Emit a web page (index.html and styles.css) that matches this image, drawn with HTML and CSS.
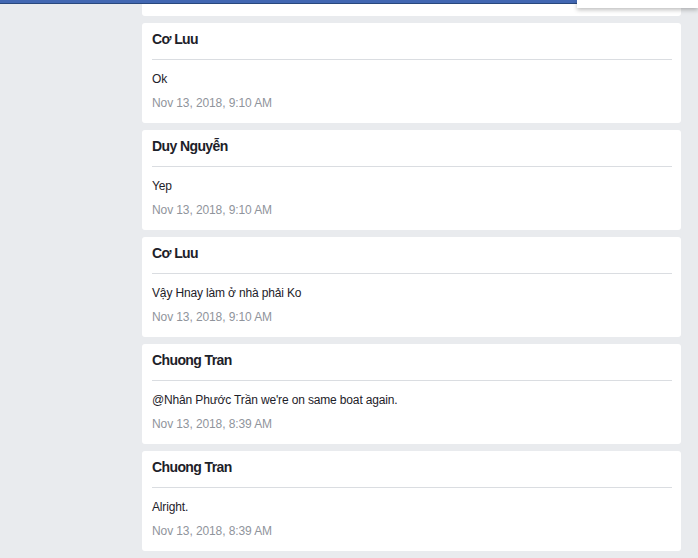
FILE: index.html
```html
<!DOCTYPE html>
<html>
<head>
<meta charset="utf-8">
<link rel="stylesheet" href="styles.css">
</head>
<body>
<div class="topbar"></div>
<div class="dropdown"></div>
<main class="feed">
  <div class="card"></div>
  <div class="card">
    <div class="name">Cơ Luu</div>
    <div class="msg">Ok</div>
    <div class="date">Nov 13, 2018, 9:10 AM</div>
  </div>
  <div class="card">
    <div class="name">Duy Nguyễn</div>
    <div class="msg">Yep</div>
    <div class="date">Nov 13, 2018, 9:10 AM</div>
  </div>
  <div class="card">
    <div class="name">Cơ Luu</div>
    <div class="msg">Vậy Hnay làm ở nhà phải Ko</div>
    <div class="date">Nov 13, 2018, 9:10 AM</div>
  </div>
  <div class="card">
    <div class="name">Chuong Tran</div>
    <div class="msg">@Nhân Phước Trần we're on same boat again.</div>
    <div class="date">Nov 13, 2018, 8:39 AM</div>
  </div>
  <div class="card">
    <div class="name">Chuong Tran</div>
    <div class="msg">Alright.</div>
    <div class="date">Nov 13, 2018, 8:39 AM</div>
  </div>
</main>
</body>
</html>
```
FILE: styles.css
```css
html, body {
  margin: 0;
  padding: 0;
  background: #e9ebee;
  font-family: "Liberation Sans", Arial, sans-serif;
  overflow: hidden;
}
.topbar {
  position: absolute;
  top: 0;
  left: 0;
  right: 0;
  height: 3px;
  background: #4267b2;
  border-bottom: 1px solid #29487d;
  z-index: 5;
}
.dropdown {
  position: absolute;
  top: 0;
  left: 577px;
  right: 0;
  height: 8px;
  background: #fff;
  box-shadow: 0 2px 4px rgba(0,0,0,0.25);
  z-index: 6;
}
.feed {
  display: flex;
  flex-direction: column;
  gap: 7px;
  margin: -84px 0 0 142px;
  width: 539px;
}
.card {
  background: #fff;
  border-radius: 3px;
  height: 100px;
  box-sizing: border-box;
  padding: 7px 9px 0 10px;
}
.name {
  font-size: 14px;
  line-height: 18px;
  font-weight: bold;
  letter-spacing: -0.6px;
  color: #1d2129;
  padding-bottom: 11px;
  border-bottom: 1px solid #dadde1;
}
.msg {
  font-size: 12px;
  line-height: 16px;
  color: #1d2129;
  letter-spacing: -0.15px;
  margin-top: 11px;
}
.date {
  font-size: 12px;
  line-height: 16px;
  color: #90949c;
  letter-spacing: -0.1px;
  margin-top: 8px;
}
```
